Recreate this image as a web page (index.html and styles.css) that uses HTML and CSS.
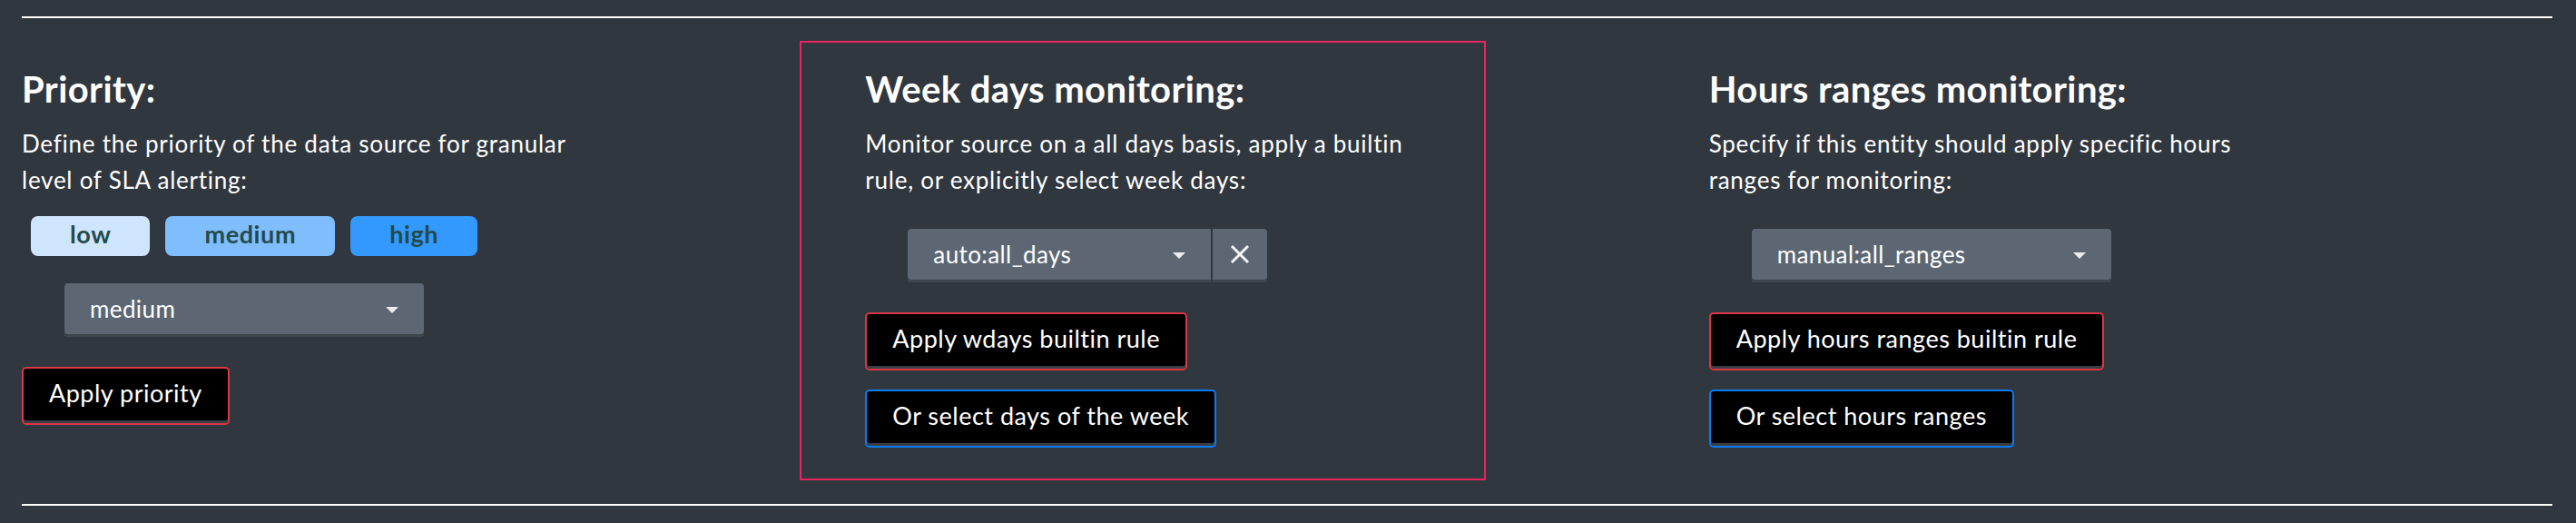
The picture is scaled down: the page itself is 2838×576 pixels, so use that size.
FILE: index.html
```html
<!DOCTYPE html>
<html lang="en">
<head>
<meta charset="utf-8">
<title>Monitoring settings</title>
<link rel="stylesheet" href="styles.css">
</head>
<body>
<div class="page">
  <hr class="rule">
  <div class="cols">
    <section class="col">
      <div class="col-inner">
        <h2 class="title">Priority:</h2>
        <p class="desc">Define the priority of the data source for granular level of SLA alerting:</p>
        <div class="pills">
          <span class="pill pill-low">low</span>
          <span class="pill pill-medium">medium</span>
          <span class="pill pill-high">high</span>
        </div>
        <div class="select-row select-row-after-pills">
          <div class="select">
            <span class="select-value">medium</span>
            <svg class="caret" width="14" height="7" viewBox="0 0 14 7"><path d="M0 0H14L7 7Z" fill="#e9edf1"/></svg>
          </div>
        </div>
        <div class="actions">
          <button class="btn btn-red">Apply priority</button>
        </div>
      </div>
    </section>
    <section class="col">
      <div class="col-inner framed">
        <h2 class="title">Week days monitoring:</h2>
        <p class="desc">Monitor source on a all days basis, apply a builtin rule, or explicitly select week days:</p>
        <div class="select-row">
          <div class="select select-clearable">
            <span class="select-value">auto:all_days</span>
            <svg class="caret" width="14" height="7" viewBox="0 0 14 7"><path d="M0 0H14L7 7Z" fill="#e9edf1"/></svg>
          </div>
          <div class="select-clear">
            <svg width="22" height="22" viewBox="0 0 22 22"><path d="M2 2L20 20M20 2L2 20" stroke="#f2f4f6" stroke-width="3" fill="none"/></svg>
          </div>
        </div>
        <div class="actions">
          <button class="btn btn-red">Apply wdays builtin rule</button>
          <button class="btn btn-blue">Or select days of the week</button>
        </div>
      </div>
    </section>
    <section class="col">
      <div class="col-inner">
        <h2 class="title">Hours ranges monitoring:</h2>
        <p class="desc">Specify if this entity should apply specific hours ranges for monitoring:</p>
        <div class="select-row">
          <div class="select">
            <span class="select-value">manual:all_ranges</span>
            <svg class="caret" width="14" height="7" viewBox="0 0 14 7"><path d="M0 0H14L7 7Z" fill="#e9edf1"/></svg>
          </div>
        </div>
        <div class="actions">
          <button class="btn btn-red">Apply hours ranges builtin rule</button>
          <button class="btn btn-blue">Or select hours ranges</button>
        </div>
      </div>
    </section>
  </div>
  <hr class="rule">
</div>
</body>
</html>
```
FILE: styles.css
```css
html, body {
  margin: 0;
  padding: 0;
  background: #31373e;
}

body {
  font-family: "Lato", "Open Sans", "Liberation Sans", sans-serif;
  color: #ffffff;
}

.page {
  padding: 18px 26px 0 24px;
}

.rule {
  border: none;
  height: 2px;
  margin: 0;
  background: #ffffff;
}

.cols {
  display: grid;
  grid-template-columns: repeat(3, 1fr);
  padding: 55px 0 62px;
}

.col-inner {
  width: 612px;
  display: flex;
  flex-direction: column;
  align-items: flex-start;
}

.framed {
  position: relative;
}

.framed::before {
  content: "";
  position: absolute;
  top: -30px;
  left: -72px;
  right: -72px;
  bottom: -36px;
  border: 2px solid #e8255f;
  pointer-events: none;
}

.title {
  margin: 0;
  font-size: 40px;
  line-height: 46px;
  font-weight: 700;
  letter-spacing: 0.4px;
}

.desc {
  margin: 17px 0 0;
  font-size: 26px;
  line-height: 40px;
  font-weight: 400;
  letter-spacing: 0.75px;
}

.pills {
  display: flex;
  gap: 17px;
  margin: 20px 0 0 10px;
}

.pill {
  height: 44px;
  box-sizing: border-box;
  padding: 0 43px 4px;
  line-height: 40px;
  border-radius: 8px;
  font-size: 27px;
  font-weight: 700;
  letter-spacing: 0.6px;
  color: #234b4b;
}

.pill-low { background: #cfe5fe; }
.pill-medium { background: #80bdfd; }
.pill-high { background: #3399fe; }

.select-row {
  display: flex;
  gap: 2px;
  margin: 34px 0 0 47px;
}

.select-row-after-pills {
  margin-top: 30px;
}

.select {
  width: 396px;
  height: 59px;
  box-sizing: border-box;
  background: #5c6773;
  border-radius: 4px;
  box-shadow: inset 0 -3px 0 #3e454d;
  display: flex;
  align-items: center;
  justify-content: space-between;
  padding: 0 28px 3px 28px;
  font-size: 26px;
  letter-spacing: 0.4px;
  line-height: 56px;
  color: #ffffff;
}

.select-clearable {
  width: 334px;
  border-radius: 4px 0 0 4px;
}

.select-clear {
  width: 60px;
  height: 59px;
  box-sizing: border-box;
  background: #5c6773;
  border-radius: 0 4px 4px 0;
  box-shadow: inset 0 -3px 0 #3e454d;
  display: flex;
  align-items: center;
  justify-content: center;
  padding-bottom: 3px;
}

.caret {
  display: block;
  margin-top: 2px;
}

.actions {
  display: flex;
  flex-direction: column;
  align-items: flex-start;
  gap: 21px;
  margin-top: 33px;
}

.btn {
  font-family: inherit;
  font-size: 27px;
  letter-spacing: 0.5px;
  line-height: 30px;
  color: #ffffff;
  background: #000000;
  border: 2px solid;
  border-radius: 5px;
  padding: 12px 28px 18px;
  box-shadow: inset 0 -3px 0 #3a3f45;
  cursor: pointer;
}

.btn-red { border-color: #dc3545; }
.btn-blue { border-color: #0a7cf2; }
```
